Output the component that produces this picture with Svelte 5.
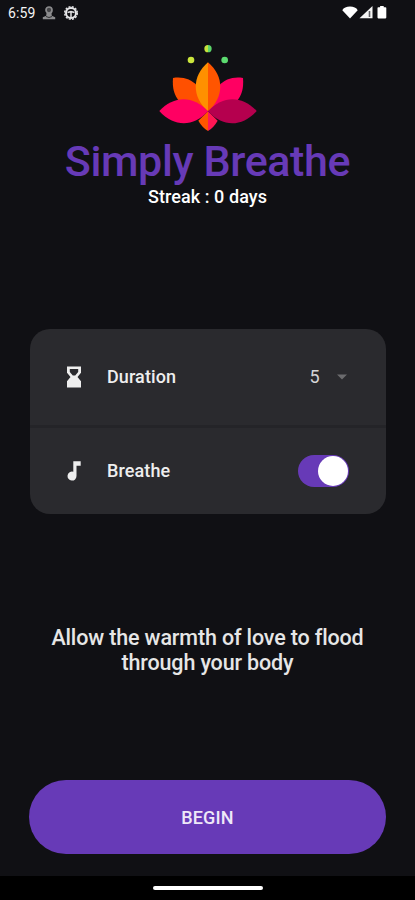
<script>
  let breathe = $state(true);
  const duration = 5;
</script>

<div class="screen">
  <header class="status">
    <span class="time">6:59</span>
    <svg class="person" width="16" height="16" viewBox="0 0 16 16">
      <circle cx="8" cy="5" r="3" fill="#444447" stroke="#8b8b8d" stroke-width="1.700" />
      <path d="M5.500 8h5l.3 2.700 3.400 1.500v2H1.800v-2L5.200 10.700z" fill="#8c8c8e" />
      <path d="M5 11.500l3 1 3-1" fill="none" stroke="#303033" />
    </svg>
    <svg class="gear" width="16" height="16" viewBox="0 0 16 16">
      <circle cx="8" cy="8" r="6.300" fill="none" stroke="#dedee0" stroke-width="1.500" stroke-dasharray="2 1.300" />
      <circle cx="8" cy="8" r="5" fill="none" stroke="#e8e8ea" stroke-width="2" />
      <path d="M4.500 7.500L8 6.500l3.500 1M8 7v6" fill="none" stroke="#dedee0" stroke-width="1.500" />
    </svg>
    <span class="grow"></span>
    <svg width="46" height="16" viewBox="0 0 46 16">
      <path d="M.3 5.300C1.500 2.600 4.500 1.500 8 1.500S14.500 2.600 15.700 5.300L8 13.500z" fill="#fff" />
      <path d="M30.500 1v12.300H17.500z" fill="#f5f5f5" />
      <path d="M27.500 6v6" stroke="#606064" stroke-width="1.600" />
      <path d="M36.300 2.300h1.800V1h3.600v1.300h1.800q.8 0 .8.8v9.500q0 .8-.8.8h-7.200q-.8 0-.8-.8V3.100q0-.8.8-.8z" fill="#fff" />
    </svg>
  </header>

  <main>
    <svg class="logo" width="116" height="105" viewBox="0 0 348 315">
      <path d="M174 30a11 11 0 0 0 0 22z" fill="#c6e33b" />
      <path d="M174 30a11 11 0 0 1 0 22z" fill="#5bd66a" />
      <circle cx="123" cy="75" r="10" fill="#cbe63d" />
      <circle cx="224" cy="75" r="10" fill="#5cdb70" />
      <path d="M69 129C123 121 160 153 174 229C92 224 64 188 69 129z" fill="#ff5000" />
      <path d="M279 129C225 121 188 153 174 229C256 224 284 188 279 129z" fill="#ff0062" />
      <path d="M174 229L145 257Q157 278 174 288z" fill="#ff5500" />
      <path d="M174 229L203 257Q191 278 174 288z" fill="#ff1654" />
      <path d="M174 82C125 123 125 187 174 229z" fill="#ff9000" />
      <path d="M174 82C223 123 223 187 174 229z" fill="#ff5500" />
      <path d="M28 228C72 181 130 181 174 229C130 277 72 277 28 228z" fill="#ff0062" />
      <path d="M174 229C218 181 276 181 320 228C276 277 218 277 174 229z" fill="#b5004e" />
    </svg>
    <h1>Simply Breathe</h1>
    <p class="streak">Streak : 0 days</p>

    <section class="card">
      <div class="row duration">
        <svg class="icon" width="24" height="24" viewBox="0 0 24 24">
          <path fill-rule="evenodd" d="M5 1.500h14v6.300L15.500 12l3.500 4.200v6.300H5v-6.300L8.500 12 5 7.800zM7.800 4v3l3 3.600h2.400l3-3.600V4z" fill="#eee" />
        </svg>
        <span class="label">Duration</span>
        <span class="value">{duration}</span>
        <svg class="caret" width="10" height="6" viewBox="0 0 10 6"><path d="M0 .5h10L5 5.500z" fill="#6b6b6e" /></svg>
      </div>
      <div class="row sound">
        <svg class="icon" width="24" height="24" viewBox="0 0 24 24">
          <path d="M11.300 2.300v10.500A4.500 4.500 0 1 0 14.500 17V6.800H18.700V2.300z" fill="#eee" />
        </svg>
        <span class="label">Breathe</span>
        <button class="switch" class:on={breathe} aria-label="Breathe" onclick={() => (breathe = !breathe)}>
          <span class="thumb"></span>
        </button>
      </div>
    </section>

    <p class="quote">Allow the warmth of love to flood<br />through your body</p>
    <button class="begin">BEGIN</button>
  </main>
  <footer><span class="handle"></span></footer>
</div>

<style>
  :global(body) { margin: 0; background: #101014; }
  .screen {
    box-sizing: border-box;
    width: 415px;
    height: 900px;
    display: flex;
    flex-direction: column;
    overflow: hidden;
    background: #101014;
    color: #eee;
    font-family: Roboto, "Noto Sans", sans-serif;
    white-space: nowrap;
  }
  .status {
    box-sizing: border-box;
    height: 26px;
    padding: 0 27px 0 8px;
    display: flex;
    align-items: center;
    flex: none;
  }
  .time { width: 28px; font-size: 14px; font-weight: 400; letter-spacing: .15px; color: #f4f4f4; }
  .person { margin-left: 5px; }
  .gear { margin-left: 6px; }
  .grow { flex: 1; }
  main { flex: 1; display: flex; flex-direction: column; align-items: center; min-height: 0; }
  .logo { display: block; margin-top: 9px; flex: none; }
  h1 {
    margin: -4px 0 0;
    height: 49px;
    line-height: 50px;
    font-size: 43px;
    font-weight: 500;
    letter-spacing: -.38px;
    color: #673ab7;
  }
  .streak { margin: 0; height: 24px; line-height: 24px; font-size: 18px; font-weight: 500; letter-spacing: .07px; color: #fff; }
  .card {
    width: 356px;
    height: 185px;
    margin-top: 120px;
    border-radius: 20px;
    background: #2a2a2e;
    overflow: hidden;
    flex: none;
  }
  .row { box-sizing: border-box; display: flex; align-items: center; padding: 0 37px 0 32px; }
  .duration { height: 99px; border-bottom: 3px solid #242428; }
  .sound { height: 86px; padding-bottom: 1px; }
  .label { margin-left: 21.500px; flex: 1; font-size: 18px; font-weight: 500; line-height: 20px; letter-spacing: .1px; }
  .value { width: 27px; font-size: 18px; line-height: 20px; color: #d5d5d7; }
  .caret { margin-right: 2px; }
  .switch {
    box-sizing: border-box;
    width: 51px;
    height: 32px;
    padding: 1px;
    border: 0;
    border-radius: 16px;
    background: #55555a;
    display: flex;
  }
  .switch.on { background: #673ab7; justify-content: flex-end; }
  .thumb { width: 30px; height: 30px; border-radius: 50%; background: #fff; }
  .quote { margin: 111px 0 0; text-align: center; font-size: 21.500px; line-height: 25px; font-weight: 500; letter-spacing: -.15px; color: #e6e6e6; }
  .begin {
    width: 357px;
    height: 74px;
    margin-top: 105px;
    padding: 0;
    border: 0;
    border-radius: 37px;
    background: #673ab7;
    color: #eee8f8;
    font: 500 18px Roboto, "Noto Sans", sans-serif;
    letter-spacing: .15px;
    flex: none;
  }
  footer { height: 24px; flex: none; background: #000; display: flex; justify-content: center; align-items: center; }
  .handle { width: 110px; height: 4px; border-radius: 2px; background: #fff; }
</style>
